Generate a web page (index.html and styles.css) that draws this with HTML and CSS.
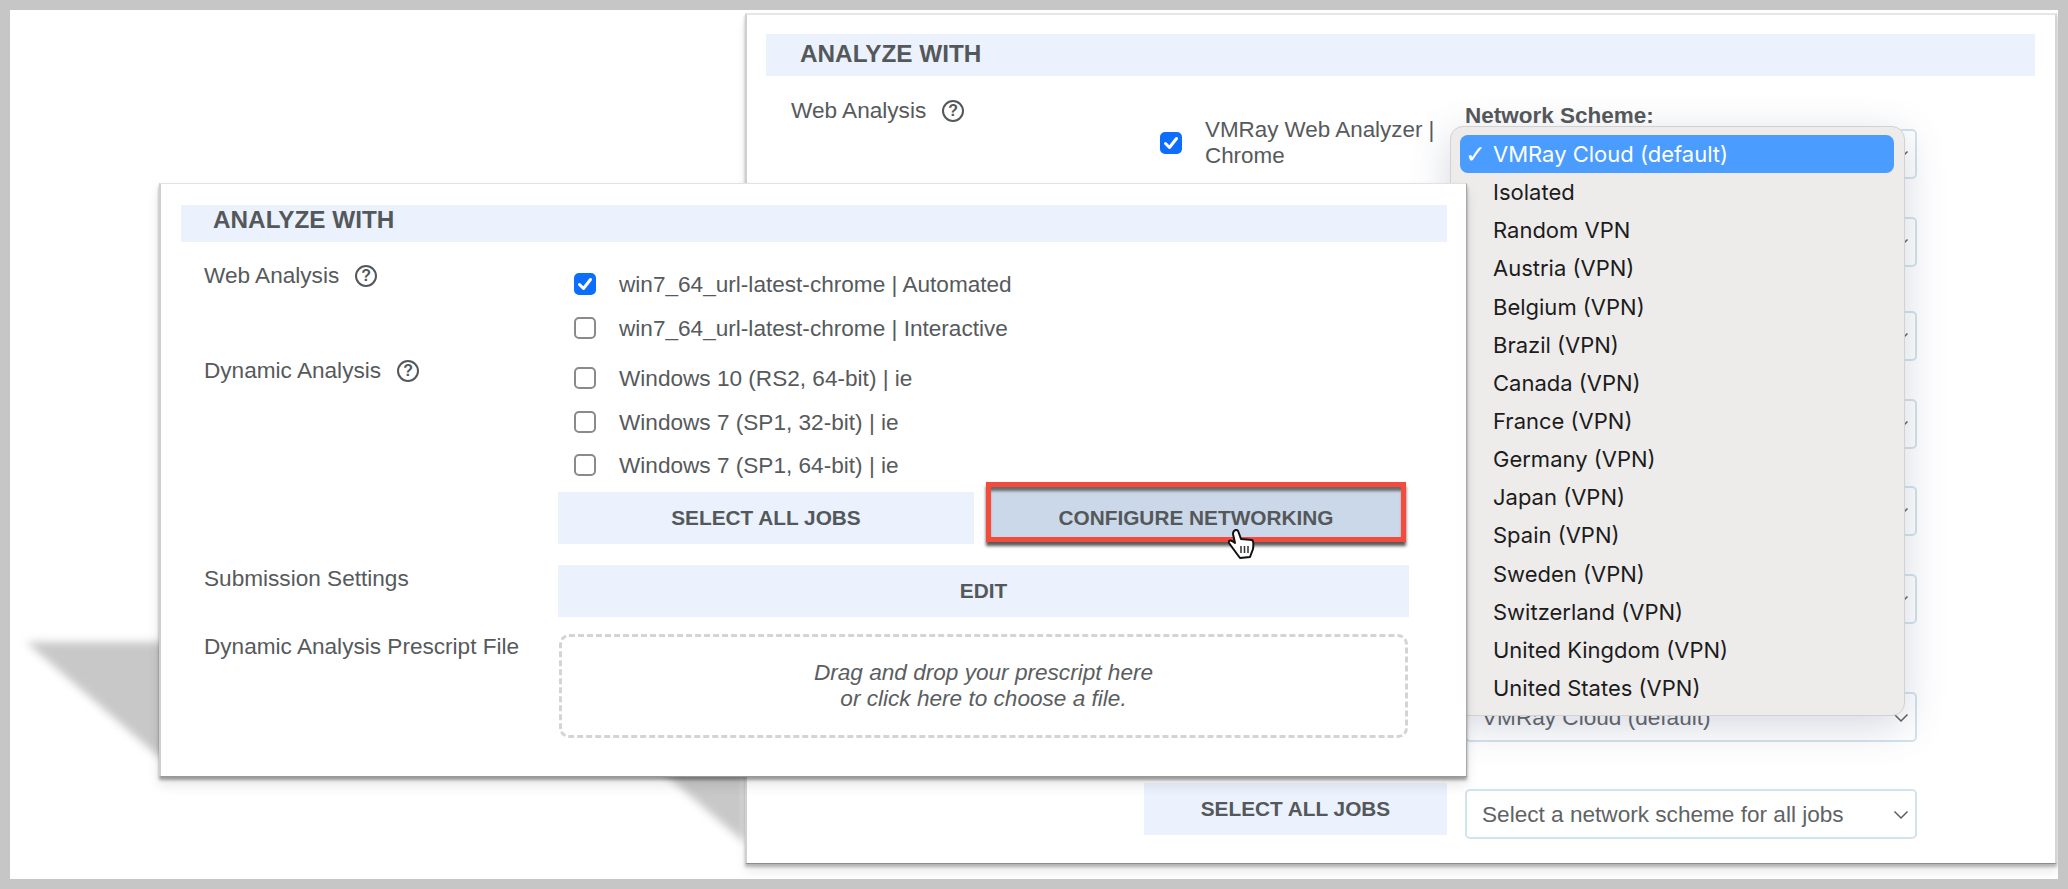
FILE: index.html
```html
<!DOCTYPE html>
<html lang="en">
<head>
<meta charset="utf-8">
<title>Analyze With</title>
<link rel="stylesheet" href="styles.css">
</head>
<body>
<div class="canvas">
  <svg class="drop drop-front" width="220" height="200" viewBox="0 0 220 200"><polygon points="6,12 200,12 200,127 139,127"/></svg>
  <svg class="drop drop-back" width="125" height="110" viewBox="0 0 125 110"><polygon points="10,10 115,10 115,100"/></svg>

  <section class="panel panel-back">
    <h2 class="band">ANALYZE WITH</h2>
    <div class="back-grid">
      <div class="label label-back">Web Analysis <span class="help">?</span></div>
      <div class="back-jobs">
        <div class="job job-back"><span class="check on"><svg viewBox="0 0 22 22" width="22" height="22"><path d="M5.5 11.5 9.5 15.5 16.5 6.5"/></svg></span><span>VMRay Web Analyzer | Chrome</span></div>
        <button class="btn btn-back">SELECT ALL JOBS</button>
      </div>
      <div class="back-nets">
        <div class="net-title">Network Scheme:</div>
        <div class="select">VMRay Cloud (default)<svg class="chev" viewBox="0 0 16 10" width="16" height="10"><path d="M1.5 1.5 8 8l6.5-6.5"/></svg></div>
        <div class="select gap-38">VMRay Cloud (default)<svg class="chev" viewBox="0 0 16 10" width="16" height="10"><path d="M1.5 1.5 8 8l6.5-6.5"/></svg></div>
        <div class="select gap-44">VMRay Cloud (default)<svg class="chev" viewBox="0 0 16 10" width="16" height="10"><path d="M1.5 1.5 8 8l6.5-6.5"/></svg></div>
        <div class="select gap-38">VMRay Cloud (default)<svg class="chev" viewBox="0 0 16 10" width="16" height="10"><path d="M1.5 1.5 8 8l6.5-6.5"/></svg></div>
        <div class="select gap-37">VMRay Cloud (default)<svg class="chev" viewBox="0 0 16 10" width="16" height="10"><path d="M1.5 1.5 8 8l6.5-6.5"/></svg></div>
        <div class="select gap-38">VMRay Cloud (default)<svg class="chev" viewBox="0 0 16 10" width="16" height="10"><path d="M1.5 1.5 8 8l6.5-6.5"/></svg></div>
        <div class="select gap-68">VMRay Cloud (default)<svg class="chev" viewBox="0 0 16 10" width="16" height="10"><path d="M1.5 1.5 8 8l6.5-6.5"/></svg></div>
        <div class="select gap-47">Select a network scheme for all jobs<svg class="chev" viewBox="0 0 16 10" width="16" height="10"><path d="M1.5 1.5 8 8l6.5-6.5"/></svg></div>
      </div>
    </div>
  </section>

  <ul class="menu">
    <li class="opt opt-on"><span class="tick">✓</span>VMRay Cloud (default)</li>
    <li class="opt">Isolated</li>
    <li class="opt">Random VPN</li>
    <li class="opt">Austria (VPN)</li>
    <li class="opt">Belgium (VPN)</li>
    <li class="opt">Brazil (VPN)</li>
    <li class="opt">Canada (VPN)</li>
    <li class="opt">France (VPN)</li>
    <li class="opt">Germany (VPN)</li>
    <li class="opt">Japan (VPN)</li>
    <li class="opt">Spain (VPN)</li>
    <li class="opt">Sweden (VPN)</li>
    <li class="opt">Switzerland (VPN)</li>
    <li class="opt">United Kingdom (VPN)</li>
    <li class="opt">United States (VPN)</li>
  </ul>

  <section class="panel panel-front">
    <h2 class="band band-front">ANALYZE WITH</h2>
    <div class="form">
      <div class="row row-web">
        <div class="label">Web Analysis <span class="help">?</span></div>
        <div class="jobs">
          <div class="job"><span class="check on"><svg viewBox="0 0 22 22" width="22" height="22"><path d="M5.5 11.5 9.5 15.5 16.5 6.5"/></svg></span>win7_64_url-latest-chrome | Automated</div>
          <div class="job"><span class="check"></span>win7_64_url-latest-chrome | Interactive</div>
        </div>
      </div>
      <div class="row row-dyn">
        <div class="label">Dynamic Analysis <span class="help">?</span></div>
        <div class="jobs">
          <div class="job"><span class="check"></span>Windows 10 (RS2, 64-bit) | ie</div>
          <div class="job"><span class="check"></span>Windows 7 (SP1, 32-bit) | ie</div>
          <div class="job"><span class="check"></span>Windows 7 (SP1, 64-bit) | ie</div>
        </div>
      </div>
      <div class="row row-btns">
        <div></div>
        <div class="btn-line">
          <button class="btn btn-all">SELECT ALL JOBS</button>
          <button class="btn btn-config">CONFIGURE NETWORKING</button>
        </div>
      </div>
      <div class="row row-sub">
        <div class="label">Submission Settings</div>
        <button class="btn btn-edit">EDIT</button>
      </div>
      <div class="row row-file">
        <div class="label">Dynamic Analysis Prescript File</div>
        <div class="dropzone">Drag and drop your prescript here<br>or click here to choose a file.</div>
      </div>
    </div>
  </section>

  <svg class="cursor" viewBox="0 0 27 31" width="27" height="31"><path class="hand" d="M6 2C8 0 10 1 10.5 3L13 10 24 11C26 12 25.5 16 25 20L22 28 12 29 9 25 1 14C0 12 2 11 4 12L7 14 5 5C5 4 5 3 6 2Z"/><path class="hand-lines" d="M13 17v7M16.500 17v7M20 17v7"/></svg>
</div>
</body>
</html>
```
FILE: styles.css
```css
* { box-sizing: border-box; }
html, body { margin: 0; padding: 0; }
body { font-family: "Liberation Sans", Arial, sans-serif; color: #565a5c; }

.canvas {
  position: relative;
  width: 2068px;
  height: 889px;
  overflow: hidden;
  background: #fff;
  border: 10px solid #c6c6c6;
}

.drop { position: absolute; filter: blur(4px); }
.drop polygon { fill: #c8c8c8; }
.drop-front { left: 10px; top: 620px; }
.drop-back { left: 620px; top: 733px; }

.panel { position: absolute; background: #fff; }
.panel-back {
  left: 735px;
  top: 3px;
  width: 1312px;
  height: 851px;
  padding: 19px 20px 0 19px;
  border-left: 2px solid #d0d0d0;
  border-right: 2px solid #d4d4d4;
  border-top: 2px solid #e6e6e6;
  border-bottom: 1px solid #8c8c8c;
  box-shadow: 0 3px 3px rgba(0, 0, 0, .25), 0 8px 10px rgba(0, 0, 0, .08);
}
.panel-front {
  left: 149px;
  top: 173px;
  width: 1308px;
  height: 594px;
  padding: 21px 19px 0 20px;
  border-left: 2px solid #cfcfcf;
  border-top: 1px solid #e2e2e2;
  border-right: 1px solid #a8a8a8;
  border-bottom: 1px solid #999;
  box-shadow: 0 3px 3px rgba(0, 0, 0, .35), 0 8px 12px rgba(0, 0, 0, .1);
}

.band {
  margin: 0;
  height: 42px;
  padding: 6px 0 0 34px;
  background: #ebf2fe;
  font-size: 24.3px;
  line-height: 28px;
  font-weight: 700;
  color: #54585a;
}
.band-front { height: 37px; padding: 1px 0 0 32px; }

.label { font-size: 22.6px; line-height: 26px; display: flex; align-items: center; gap: 16px; align-self: start; }
.row-dyn .label, .row-sub .label, .row-file .label { padding-top: 1px; }
.help {
  width: 22px;
  height: 22px;
  border: 2px solid #54585a;
  border-radius: 50%;
  display: inline-flex;
  align-items: center;
  justify-content: center;
  font-size: 16px;
  font-weight: 700;
  line-height: 1;
  color: #54585a;
}

.check {
  flex: none;
  width: 22px;
  height: 22px;
  border: 2px solid #8a8a8a;
  border-radius: 5px;
  background: #fff;
  position: relative;
}
.check svg { position: absolute; left: -2px; top: -2px; }
.check path { fill: none; stroke: #fff; stroke-width: 3; stroke-linecap: round; stroke-linejoin: round; }
.check.on { background: #0d6efd; border-color: #0d6efd; }

.job { display: flex; align-items: flex-start; gap: 23px; height: 22px; font-size: 22.6px; line-height: 24px; white-space: nowrap; }

.btn {
  border: 0;
  background: #ebf2fe;
  font-family: inherit;
  font-size: 20.8px;
  font-weight: 700;
  color: #54585a;
  padding: 0;
  margin: 0;
  text-align: center;
}

.back-grid {
  display: grid;
  grid-template-columns: 378px 321px 452px;
  margin-top: 22px;
  height: 741px;
}
.label-back { padding-left: 25px; }
.back-jobs { display: flex; flex-direction: column; justify-content: space-between; padding: 19px 0 4px 16px; width: 303px; }
.job-back { height: 52px; white-space: normal; font-size: 22.4px; line-height: 26px; align-items: center; }
.job-back span:last-child { display: block; }
.btn-back { width: 303px; height: 52px; margin-left: -16px; }
.net-title { font-size: 22.5px; font-weight: 700; line-height: 26px; margin: 5px 0 0; color: #54585a; }

.select {
  height: 50px;
  border: 2px solid #d3e3ec;
  border-radius: 5px;
  display: flex;
  align-items: center;
  justify-content: space-between;
  padding: 1px 6px 0 15px;
  font-size: 22.6px;
  color: #5f6365;
  background: #fff;
}
.chev path { fill: none; stroke: #5a5e60; stroke-width: 1.5; }
.gap-37 { margin-top: 37px; }
.gap-38 { margin-top: 38px; }
.gap-44 { margin-top: 44px; }
.gap-47 { margin-top: 47px; }
.gap-68 { margin-top: 68px; }

.menu {
  position: absolute;
  left: 1440px;
  top: 116px;
  width: 455px;
  height: 590px;
  margin: 0;
  padding: 8px 10px 0 9px;
  list-style: none;
  background: #edeceb;
  border: 1px solid #d2d2d2;
  border-radius: 13px;
  box-shadow: 0 10px 40px rgba(80, 90, 130, .24);
  font-family: Inter, "Liberation Sans", sans-serif;
  font-size: 22px;
  color: #1c1c1c;
}
.opt { height: 38.15px; line-height: 39px; padding-left: 33px; position: relative; border-radius: 8px; }
.opt-on { background: #4a9cff; color: #fff; }
.tick { position: absolute; left: 5px; top: 0; font-family: "DejaVu Sans", sans-serif; font-size: 25px; }

.form { margin-top: 21px; padding-left: 23px; }
.row { display: grid; grid-template-columns: 354px 851px; }
.jobs { display: flex; flex-direction: column; gap: 22px; padding: 10px 0 0 16px; }
.row-dyn { margin-top: 18px; }
.row-dyn .jobs { gap: 21.500px; }
.row-btns { margin-top: 16px; }
.btn-line { display: flex; align-items: flex-start; gap: 12px; height: 52px; }
.btn-all { width: 416px; height: 52px; }
.btn-config {
  width: 420px;
  height: 60px;
  margin-top: -10px;
  padding-top: 12px;
  background: #cbd8e9;
  border: 5px solid #f44c3c;
  box-shadow: inset 0 5px 3px -1px #6a6a6a, 0 4px 3px #5a5a5a;
}
.row-sub { margin-top: 21px; }
.btn-edit { height: 52px; }
.row-file { margin-top: 16px; }
.dropzone {
  height: 104px;
  margin: 1px 1px 0;
  border: 3px dashed #d4d4d4;
  border-radius: 10px;
  display: flex;
  flex-direction: column;
  align-items: center;
  justify-content: center;
  text-align: center;
  font-size: 22.6px;
  line-height: 26px;
  font-style: italic;
  color: #5a5e60;
}

.cursor { position: absolute; left: 1218px; top: 519px; }
.hand { fill: #fff; stroke: #111; stroke-width: 2; stroke-linejoin: round; }
.hand-lines { fill: none; stroke: #333; stroke-width: 1.5; }
```
